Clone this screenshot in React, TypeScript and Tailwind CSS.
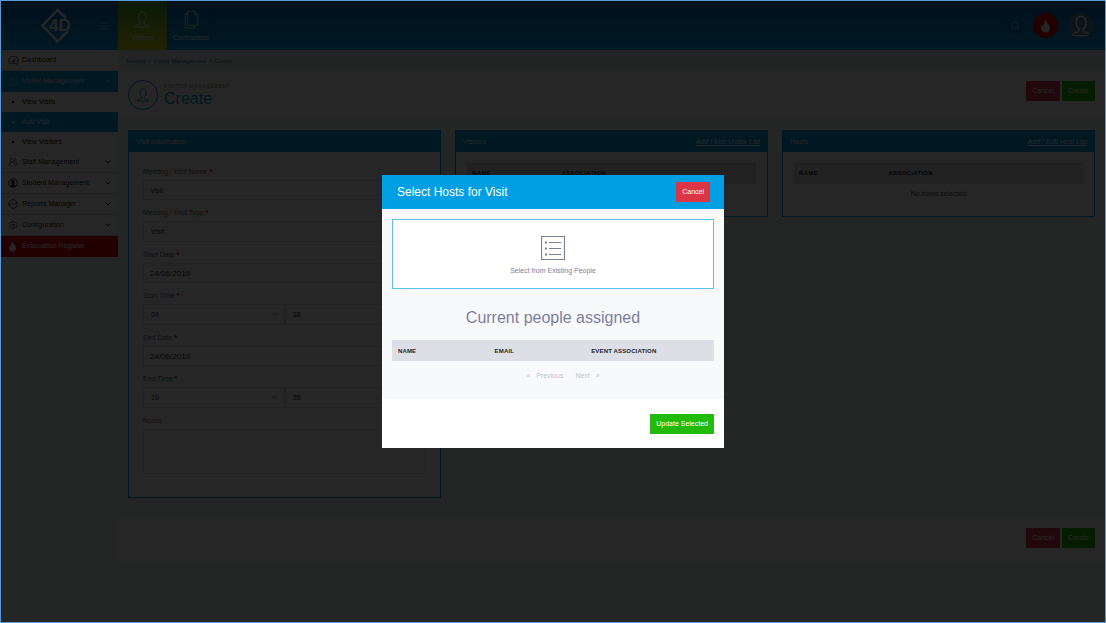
import type { ReactNode } from "react";
import clsx from "clsx";
import { Bell, ChevronDown, Menu, Settings, UsersRound } from "lucide-react";

interface IconProps {
  className?: string;
}

function PersonIcon({ className }: IconProps) {
  return (
    <svg viewBox="0 0 32 32" fill="none" stroke="currentColor" className={className} aria-hidden="true">
      <path d="M13 20.500c-3-2-4-5.500-4-10C9 5 12 2 16 2s7 3 7 8.500c0 4.500-1 8-4 10v3c0 2 10 1.500 11 6.500H2c1-5 11-4.500 11-6.500z" />
    </svg>
  );
}

function FlameIcon({ className }: IconProps) {
  return (
    <svg viewBox="0 0 24 32" fill="currentColor" className={className} aria-hidden="true">
      <path d="M11 0c1 6 11 12 11 20.500C22 27 17.500 31 12 31S2 27 2 20.500c0-3 1.500-6 3-8 .5 2 1 3 2.500 4C7 10 11 6 11 0z" />
    </svg>
  );
}

function DocumentsIcon({ className }: IconProps) {
  return (
    <svg viewBox="0 0 28 36" fill="none" stroke="currentColor" strokeWidth="1.500" className={className} aria-hidden="true">
      <path d="M7 2h13l6 7v20H7z" />
      <path d="M20 2v7h6" />
      <path d="M7 7H2v27h18v-5" />
    </svg>
  );
}

function DashboardIcon({ className }: IconProps) {
  return (
    <svg viewBox="0 0 24 20" fill="none" stroke="currentColor" strokeWidth="1.800" className={className} aria-hidden="true">
      <path d="M5 18.500a10.500 10.500 0 1 1 14 0l-3-2.500H8z" />
      <path d="m12 12 5-5M5 11h2M12 4v2M17 11h2" />
      <circle cx="12" cy="12" r="1.500" />
    </svg>
  );
}

function StudentIcon({ className }: IconProps) {
  return (
    <svg viewBox="0 0 24 24" className={className} aria-hidden="true">
      <circle cx="12" cy="12" r="10.500" fill="none" stroke="currentColor" strokeWidth="2" />
      <path d="M12 4c3 0 4.500 2 4.500 5s-1 4.500-2.500 5.500c0 2 4 2 4.500 4.500-3.500 3.500-9.500 3.500-13 0 .5-2.500 4.500-2.500 4.500-4.500C8.500 13.500 7.500 12 7.500 9S9 4 12 4z" fill="currentColor" />
    </svg>
  );
}

function ReportsIcon({ className }: IconProps) {
  return (
    <svg viewBox="0 0 24 24" fill="none" stroke="currentColor" strokeWidth="1.800" className={className} aria-hidden="true">
      <circle cx="12" cy="12" r="10.500" />
      <path d="M2 13h4l4-4 4 5 4-4h4" />
    </svg>
  );
}

function ListIcon({ className }: IconProps) {
  return (
    <svg viewBox="0 0 24 24" fill="none" stroke="currentColor" className={className} aria-hidden="true">
      <path d="M.5.5h23v23H.5z" strokeWidth="1.200" />
      <path d="M8 6.500h12M8 12.500h12M8 18.500h12" />
      <path d="M4 6.500h2M4 12.500h2M4 18.500h2" strokeWidth="2" />
    </svg>
  );
}

function Logo() {
  return (
    <svg viewBox="0 0 34 36" className="h-9 w-[34px] text-white" aria-label="4D" role="img">
      <path d="M26 10 17.500 2 2.500 17.500 17.500 33.500 28 23" fill="none" stroke="currentColor" strokeWidth="2.500" />
      <text x="9" y="23" fill="currentColor" fontSize="17" fontWeight="700">
        4D
      </text>
    </svg>
  );
}

interface NavItem {
  label: string;
  icon: ReactNode;
  active?: boolean;
  danger?: boolean;
  open?: boolean;
  children?: { label: string; active?: boolean }[];
}

const navItems: NavItem[] = [
  { label: "Dashboard", icon: <DashboardIcon className="h-[9px] w-[11px]" /> },
  {
    label: "Visitor Management",
    icon: <PersonIcon className="size-[9px] stroke-2" />,
    active: true,
    open: true,
    children: [{ label: "View Visits" }, { label: "Add Visit", active: true }, { label: "View Visitors" }],
  },
  { label: "Staff Management", icon: <UsersRound className="size-[10px] stroke-[1.500]" />, children: [] },
  { label: "Student Management", icon: <StudentIcon className="size-[10px]" />, children: [] },
  { label: "Reports Manager", icon: <ReportsIcon className="size-[10px]" />, children: [] },
  { label: "Configuration", icon: <Settings className="size-[10px] stroke-[1.500]" />, children: [] },
  { label: "Evacuation Register", icon: <FlameIcon className="h-[11px] w-[9px]" />, danger: true },
];

function Sidebar() {
  return (
    <nav className="w-[117px] shrink-0">
      {navItems.map((item) => (
        <div key={item.label}>
          <a
            href="#"
            className={clsx(
              "flex h-[21px] items-center border-b pl-[7px] pr-1.5",
              item.active && "border-[#009fe3] bg-[#009fe3] text-white",
              item.danger && "border-[#e60000] bg-[#e60000] text-white",
              !item.active && !item.danger && "border-[#d8dcdf] bg-white text-[#222222]",
            )}
          >
            <span className="flex w-[14px] items-center">{item.icon}</span>
            <span className="flex-1">{item.label}</span>
            {item.children && <ChevronDown className="size-2 stroke-[3]" />}
          </a>
          {item.open &&
            item.children?.map((child) => (
              <a
                key={child.label}
                href="#"
                className={clsx(
                  "flex h-5 items-center pl-[11px]",
                  child.active ? "bg-[#009fe3] text-white" : "bg-white text-[#222222]",
                )}
              >
                <span className="mr-[8px] size-[2px] bg-current" />
                {child.label}
              </a>
            ))}
        </div>
      ))}
    </nav>
  );
}

function TopBar() {
  return (
    <header className="flex h-[49px] bg-linear-to-b from-[#0065b5] to-[#00a8ec] text-white">
      <div className="flex w-[117px] shrink-0 items-center justify-between pl-[39px] pr-[9px]">
        <Logo />
        <button type="button" aria-label="Toggle menu">
          <Menu className="size-[10px] stroke-1" />
        </button>
      </div>
      <a
        href="#"
        className="flex w-[49px] flex-col items-center gap-[5px] bg-linear-to-b from-[#2fa836] to-[#e0e000] pt-[10px]"
      >
        <PersonIcon className="size-[17px] stroke-[1.500]" />
        Visitors
      </a>
      <a href="#" className="flex w-[49px] flex-col items-center gap-1 border-r border-[#0078c0] pt-[9px]">
        <DocumentsIcon className="h-[19px] w-[15px]" />
        Contractors
      </a>
      <div className="ml-auto flex items-center gap-[10px] pr-3">
        <button
          type="button"
          aria-label="Notifications"
          className="flex size-4 items-center justify-center rounded-full bg-[#0078c4]"
        >
          <Bell className="size-[10px] stroke-[1.500]" />
        </button>
        <button
          type="button"
          aria-label="Evacuation"
          className="flex size-[25px] items-center justify-center rounded-full bg-[#e60000]"
        >
          <FlameIcon className="h-[14px] w-[11px]" />
        </button>
        <button
          type="button"
          aria-label="Account"
          className="flex size-[25px] items-center justify-center overflow-hidden rounded-full bg-[#5a87a5]"
        >
          <PersonIcon className="size-[22px] stroke-2" />
        </button>
      </div>
    </header>
  );
}

function Button({ children, tone }: { children: ReactNode; tone: "red" | "green" }) {
  return (
    <button
      type="button"
      className={clsx("h-5 px-1.5 text-white", tone === "red" ? "bg-[#dc3545]" : "bg-[#22bb0c]")}
    >
      {children}
    </button>
  );
}

function FormActions() {
  return (
    <div className="flex gap-[2px]">
      <Button tone="red">Cancel</Button>
      <Button tone="green">Create</Button>
    </div>
  );
}

function Panel({ title, link, children }: { title: string; link?: string; children: ReactNode }) {
  return (
    <section className="border border-[#009fe3] bg-white">
      <div className="flex h-[21px] items-center justify-between bg-[#009fe3] px-[7px] text-white">
        <h2>{title}</h2>
        {link && (
          <a href="#" className="italic underline">
            {link}
          </a>
        )}
      </div>
      {children}
    </section>
  );
}

function PeopleTable({ empty }: { empty: string }) {
  return (
    <div className="p-[10px]">
      <table className="w-full table-fixed border border-[#f2f3f5]">
        <thead className="bg-[#dcdfe5] text-left text-[6px] tracking-wider text-[#212529]">
          <tr className="h-[21px]">
            <th className="w-[31%] pl-[5px]">NAME</th>
            <th className="pl-[5px]">ASSOCIATION</th>
          </tr>
        </thead>
        <tbody>
          <tr className="h-[22px] text-center text-[#555555]">
            <td colSpan={2}>{empty}</td>
          </tr>
        </tbody>
      </table>
    </div>
  );
}

function Field({ id, label, required = true, children }: { id: string; label: string; required?: boolean; children: ReactNode }) {
  return (
    <div className="mb-[9px]">
      <label htmlFor={id} className="mb-1 block leading-2 text-[#6b6f82]">
        {label}
        {required && <span className="font-bold text-[#ff0000]"> *</span>}
      </label>
      {children}
    </div>
  );
}

function Select({ id, value, label }: { id?: string; value: string; label?: string }) {
  return (
    <div className="relative flex-1">
      <select
        id={id}
        aria-label={label}
        className="block h-[21px] w-full appearance-none border border-[#e2e5ec] bg-white px-[7px] text-[#333333]"
      >
        <option>{value}</option>
      </select>
      <ChevronDown className="absolute right-[7px] top-[7px] size-[7px] text-[#444444]" />
    </div>
  );
}

function VisitForm() {
  const inputClass = "block h-5 w-full border border-[#e2e5ec] bg-white px-1.5 text-[#333333]";

  return (
    <form className="px-[14px] pb-[14px] pt-4">
      <Field id="visit-name" label="Meeting / Visit Name">
        <input id="visit-name" defaultValue="Visit" className={inputClass} />
      </Field>
      <Field id="visit-type" label="Meeting / Visit Type">
        <Select id="visit-type" value="Visit" />
      </Field>
      <Field id="start-date" label="Start Date">
        <input id="start-date" defaultValue="24/06/2019" className={clsx(inputClass, "text-[8px]")} />
      </Field>
      <Field id="start-hour" label="Start Time">
        <div className="flex">
          <Select id="start-hour" value="09" />
          <Select label="Start minute" value="38" />
        </div>
      </Field>
      <Field id="end-date" label="End Date">
        <input id="end-date" defaultValue="24/06/2019" className={clsx(inputClass, "text-[8px]")} />
      </Field>
      <Field id="end-hour" label="End Time">
        <div className="flex">
          <Select id="end-hour" value="10" />
          <Select label="End minute" value="38" />
        </div>
      </Field>
      <Field id="notes" label="Notes" required={false}>
        <textarea id="notes" className="block h-[45px] w-full resize-none border border-[#e2e5ec] bg-white" />
      </Field>
    </form>
  );
}

function SelectHostsModal() {
  return (
    <div className="absolute inset-0 flex items-center justify-center bg-black/85">
      <div role="dialog" aria-modal="true" aria-labelledby="hosts-title" className="w-[342px] bg-white">
        <div className="flex h-[34px] items-center justify-between bg-[#009fe3] pl-[15px] pr-[14px]">
          <h2 id="hosts-title" className="text-[12px] text-white">
            Select Hosts for Visit
          </h2>
          <Button tone="red">Cancel</Button>
        </div>
        <div className="bg-[#f8f9fb] px-[10px] pb-[18px] pt-[10px]">
          <button
            type="button"
            className="flex h-[70px] w-full flex-col items-center justify-center gap-[6px] border border-[#5bc0eb] bg-white pt-1 text-[#7b7f9e]"
          >
            <ListIcon className="size-6" />
            Select from Existing People
          </button>
          <h3 className="mt-[19px] text-center text-[16px] leading-5 text-[#7b7f9e]">Current people assigned</h3>
          <table className="mt-3 w-full table-fixed">
            <thead className="bg-[#dcdfe5] text-left text-[6px] tracking-wide text-[#212529]">
              <tr className="h-[21px]">
                <th className="w-[30%] pl-1.5">NAME</th>
                <th className="w-[30%] pl-1.5">EMAIL</th>
                <th className="pl-1.5">EVENT ASSOCIATION</th>
              </tr>
            </thead>
          </table>
          <div className="mt-[10px] flex justify-center gap-3 pl-5 text-[#c3c6cb]">
            <button type="button" disabled className="flex gap-1.5">
              <span>«</span> Previous
            </button>
            <button type="button" disabled className="flex gap-1.5">
              Next <span>»</span>
            </button>
          </div>
        </div>
        <div className="flex h-[49px] items-center justify-end px-[10px]">
          <Button tone="green">Update Selected</Button>
        </div>
      </div>
    </div>
  );
}

export default function App() {
  return (
    <div className="relative flex min-h-screen flex-col border border-[#5b9bd5] bg-[#f2f7f5] font-['Liberation_Sans',Arial,sans-serif] text-[7px] leading-[10px]">
      <TopBar />
      <div className="flex flex-1">
        <Sidebar />
        <main className="min-w-0 flex-1">
          <div className="flex h-[21px] items-center gap-[3px] bg-[#eaf0ee] px-2 text-[6px] text-[#777777]">
            <a href="#" className="text-[#0088cc]">
              Visitors
            </a>
            /
            <a href="#" className="text-[#0088cc]">
              Visitor Management
            </a>
            /<span>Create</span>
          </div>
          <div className="flex h-12 justify-between border-b border-[#e1e6e8] bg-white px-[10px]">
            <div className="flex items-center gap-[6px]">
              <span className="flex size-[30px] items-center justify-center rounded-full border border-[#009fe3] text-[#009fe3]">
                <PersonIcon className="size-[14px] stroke-2" />
              </span>
              <div className="pt-[2px]">
                <div className="text-[5px] leading-1.5 tracking-widest text-[#777777]">VISITOR MANAGEMENT</div>
                <h1 className="text-[16px] leading-5 text-[#009fe3]">Create</h1>
              </div>
            </div>
            <div className="pt-[10px]">
              <FormActions />
            </div>
          </div>
          <div className="grid grid-cols-3 items-start gap-[14px] px-[10px] pb-[19px] pt-[11px]">
            <Panel title="Visit Information">
              <VisitForm />
            </Panel>
            <Panel title="Visitors" link="Add / Edit Visitor List">
              <PeopleTable empty="No visitors selected" />
            </Panel>
            <Panel title="Hosts" link="Add / Edit Host List">
              <PeopleTable empty="No hosts selected" />
            </Panel>
          </div>
          <div className="flex h-12 justify-end border-b border-[#e1e6e8] bg-white px-[10px] pt-[11px]">
            <FormActions />
          </div>
        </main>
      </div>
      <SelectHostsModal />
    </div>
  );
}
